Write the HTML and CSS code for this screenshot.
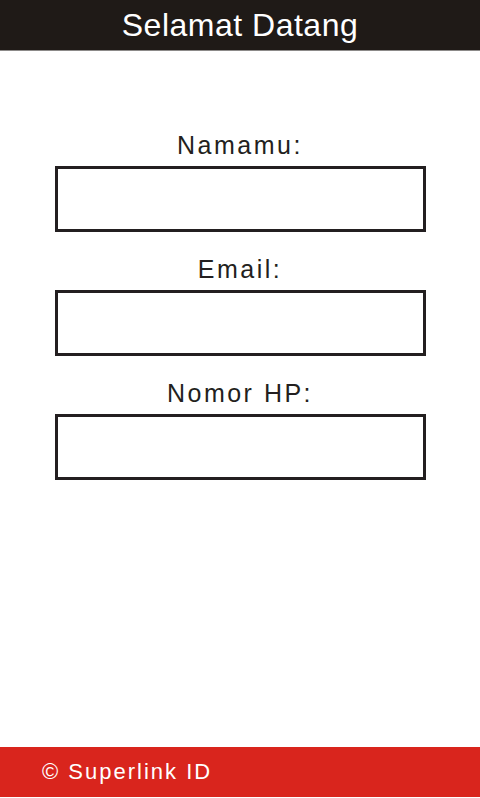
FILE: index.html
```html
<!DOCTYPE html>
<html lang="id">
<head>
<meta charset="utf-8">
<title>Selamat Datang</title>
<link rel="stylesheet" href="styles.css">
</head>
<body>
<div class="page">
  <header class="topbar">Selamat Datang</header>
  <main class="form">
    <div class="field">
      <div class="label">Namamu:</div>
      <div class="box"></div>
    </div>
    <div class="field">
      <div class="label">Email:</div>
      <div class="box"></div>
    </div>
    <div class="field">
      <div class="label">Nomor HP:</div>
      <div class="box"></div>
    </div>
  </main>
  <footer class="footer">© Superlink ID</footer>
</div>
</body>
</html>
```
FILE: styles.css
```css
html, body {
  margin: 0;
  padding: 0;
  background: #ffffff;
}
.page {
  width: 480px;
  height: 798px;
  display: flex;
  flex-direction: column;
  font-family: "Liberation Sans", Arial, sans-serif;
  color: #231f20;
}
.topbar {
  height: 50px;
  line-height: 50px;
  background: #1f1a17;
  border-bottom: 1px solid #8c8a89;
  color: #ffffff;
  text-align: center;
  font-size: 32px;
  letter-spacing: 0.5px;
}
.form {
  flex: 1;
  display: flex;
  flex-direction: column;
  padding-top: 57px;
}
.field {
  display: flex;
  flex-direction: column;
  padding-top: 22px;
}
.label {
  height: 30px;
  line-height: 30px;
  font-size: 25px;
  letter-spacing: 2.5px;
  text-align: center;
  margin-bottom: 6px;
}
.box {
  box-sizing: border-box;
  width: 371px;
  height: 66px;
  margin-left: 55px;
  border: 3px solid #231f20;
  background: #ffffff;
}
.footer {
  height: 50px;
  line-height: 50px;
  margin-bottom: 1px;
  background: #d9251d;
  color: #ffffff;
  font-size: 22px;
  letter-spacing: 2px;
  padding-left: 42px;
}
```
